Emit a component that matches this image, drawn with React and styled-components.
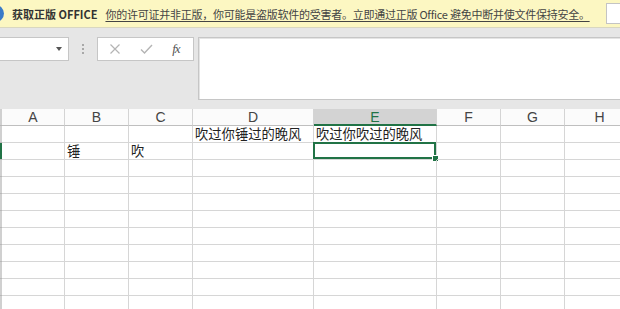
import React from "react";
import styled, { createGlobalStyle } from "styled-components";

const GlobalStyle = createGlobalStyle`
  html, body {
    margin: 0;
    padding: 0;
    background: #ffffff;
    overflow: hidden;
  }
  #root {
    width: 620px;
    height: 309px;
    overflow: hidden;
  }
`;

const Page = styled.div`
  width: 620px;
  height: 309px;
  display: flex;
  flex-direction: column;
  overflow: hidden;
  font-family: "Noto Sans CJK SC", "Noto Sans", sans-serif;
`;

const Banner = styled.div`
  height: 27px;
  flex: none;
  display: flex;
  align-items: center;
  background: #fcf7c2;
  border-bottom: 1px solid #d9d7c0;
  white-space: nowrap;
`;

const InfoDot = styled.span`
  flex: none;
  width: 17px;
  height: 17px;
  margin-left: -13px;
  border-radius: 50%;
  background: #3a7bc8;
`;

const BannerTitle = styled.span`
  margin-left: 8px;
  font-size: 11px;
  font-weight: bold;
  color: #333333;
`;

const BannerLink = styled.span`
  margin-left: 8px;
  font-size: 11px;
  letter-spacing: -0.25px;
  color: #444444;
  text-decoration: underline;
  text-underline-offset: 2px;
`;

const BannerInput = styled.span`
  flex: none;
  margin-left: auto;
  margin-right: -8px;
  width: 20px;
  height: 19px;
  background: #ffffff;
  border: 1px solid #c4c4c4;
`;

const FormulaArea = styled.div`
  height: 81px;
  flex: none;
  background: #e6e6e6;
  display: flex;
  align-items: flex-start;
  padding-top: 9px;
  box-sizing: border-box;
`;

const NameBox = styled.div`
  width: 70px;
  height: 24px;
  box-sizing: border-box;
  margin-left: -1px;
  background: #ffffff;
  border: 1px solid #c6c6c6;
  display: flex;
  align-items: center;
  justify-content: flex-end;
  padding-right: 6px;
`;

const Caret = styled.span`
  width: 0;
  height: 0;
  border-left: 3.5px solid transparent;
  border-right: 3.5px solid transparent;
  border-top: 4px solid #555555;
`;

const Grip = styled.div`
  width: 28px;
  height: 24px;
  display: flex;
  flex-direction: column;
  align-items: center;
  justify-content: center;
  gap: 2px;
  span {
    width: 2px;
    height: 2px;
    background: #a8a8a8;
  }
`;

const FxBox = styled.div`
  width: 97px;
  height: 24px;
  box-sizing: border-box;
  background: #ffffff;
  border: 1px solid #c6c6c6;
  display: flex;
  align-items: center;
  justify-content: space-around;
  padding: 0 4px 0 2px;
`;

const Fx = styled.span`
  font-family: "Liberation Serif", serif;
  font-style: italic;
  font-size: 13px;
  color: #555555;
  letter-spacing: -1px;
`;

const FormulaInput = styled.div`
  margin-left: 4px;
  flex: 1;
  height: 63px;
  box-sizing: border-box;
  background: #ffffff;
  border: 1px solid #c6c6c6;
  border-right: none;
  box-shadow: inset 1px 1px 0 #e4e4e4;
`;

const Sheet = styled.div`
  flex: 1;
  display: grid;
  grid-template-columns: 2px 63px 64px 64px 121px 123px 64px 64px 70px;
  grid-template-rows: 17px;
  grid-auto-rows: 17px;
  background: #ffffff;
`;

const RowHead = styled.div`
  background: ${(p) => (p.$active ? "#217346" : "#d0d0d0")};
  border-bottom: 1px solid #b8b8b8;
  box-sizing: border-box;
`;

const ColHead = styled.div`
  box-sizing: border-box;
  display: flex;
  align-items: center;
  justify-content: center;
  font-family: "Liberation Sans", "Noto Sans", sans-serif;
  font-size: 14px;
  color: ${(p) => (p.$active ? "#217346" : "#444444")};
  background: ${(p) => (p.$active ? "#d3d3d3" : "#fbfbfb")};
  border-right: 1px solid #d4d4d4;
  border-bottom: ${(p) => (p.$active ? "2px solid #217346" : "1px solid #bfbfbf")};
`;

const Cell = styled.div`
  position: relative;
  box-sizing: border-box;
  border-right: 1px solid #d6d6d6;
  border-bottom: 1px solid #d6d6d6;
  font-size: 13.3px;
  line-height: 16px;
  color: #222222;
  padding-left: 2px;
  white-space: nowrap;
  overflow: visible;
  ${(p) =>
    p.$selected &&
    `
    box-shadow: inset 0 0 0 2px #217346;
    margin: -1px 0 0 -1px;
  `}
`;

const FillHandle = styled.span`
  position: absolute;
  right: -3px;
  bottom: -3px;
  width: 5px;
  height: 5px;
  background: #217346;
  border: 1px solid #ffffff;
`;

const columns = ["A", "B", "C", "D", "E", "F", "G", "H"];

const data = {
  "0-3": "吹过你锤过的晚风",
  "0-4": "吹过你吹过的晚风",
  "1-1": "锤",
  "1-2": "吹",
};

function CrossIcon() {
  return (
    <svg width="12" height="12" viewBox="0 0 12 12">
      <path d="M1.5 1.5 L10.5 10.5 M10.5 1.5 L1.5 10.5" stroke="#b4b4b4" strokeWidth="1.2" fill="none" />
    </svg>
  );
}

function CheckIcon() {
  return (
    <svg width="13" height="12" viewBox="0 0 13 12">
      <path d="M1 6.5 L4.5 10 L12 2" stroke="#b4b4b4" strokeWidth="1.4" fill="none" />
    </svg>
  );
}

export default function App() {
  const rows = Array.from({ length: 11 }, (_, i) => i);
  return (
    <>
      <GlobalStyle />
      <Page>
        <Banner>
          <InfoDot />
          <BannerTitle>获取正版 OFFICE</BannerTitle>
          <BannerLink>
            你的许可证并非正版，你可能是盗版软件的受害者。立即通过正版 Office 避免中断并使文件保持安全。
          </BannerLink>
          <BannerInput />
        </Banner>
        <FormulaArea>
          <NameBox>
            <Caret />
          </NameBox>
          <Grip>
            <span />
            <span />
            <span />
          </Grip>
          <FxBox>
            <CrossIcon />
            <CheckIcon />
            <Fx>fx</Fx>
          </FxBox>
          <FormulaInput />
        </FormulaArea>
        <Sheet>
          <RowHead />
          {columns.map((c, i) => (
            <ColHead key={c} $active={i === 4}>
              {c}
            </ColHead>
          ))}
          {rows.map((r) => (
            <React.Fragment key={r}>
              <RowHead $active={r === 1} />
              {columns.map((c, ci) => {
                const selected = r === 1 && ci === 4;
                return (
                  <Cell key={c} $selected={selected}>
                    {data[`${r}-${ci}`]}
                    {selected && <FillHandle />}
                  </Cell>
                );
              })}
            </React.Fragment>
          ))}
        </Sheet>
      </Page>
    </>
  );
}
